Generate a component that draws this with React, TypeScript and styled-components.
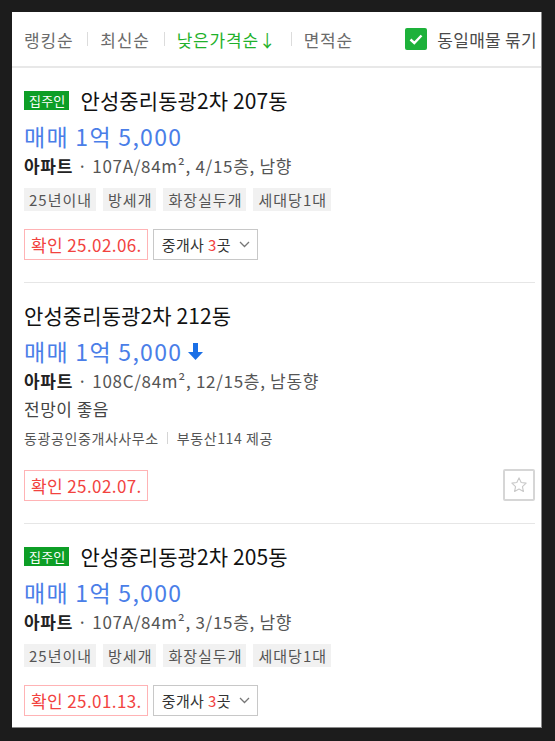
import React from "react";
import styled, { createGlobalStyle } from "styled-components";

const Global = createGlobalStyle`
  html, body { margin: 0; padding: 0; background: #1c1c1c; }
  body { font-family: "Noto Sans CJK KR", "Noto Sans", sans-serif; }
  * { box-sizing: border-box; }
`;

const Frame = styled.div`
  width: 555px;
  height: 741px;
  padding: 12px 13px 13px 12px;
  background: #1c1c1c;
`;

const Panel = styled.div`
  width: 530px;
  height: 716px;
  background: #fff;
  overflow: hidden;
  border-right: 1px solid #8a8a8a;
  border-bottom: 1px solid #8a8a8a;
`;

const Header = styled.div`
  height: 56px;
  display: flex;
  align-items: center;
  padding: 0 4px 0 12px;
  border-bottom: 2px solid #e8e8e8;
`;

const SortTab = styled.span<{ $active?: boolean }>`
  font-size: 17px;
  color: ${(p) => (p.$active ? "#1fb12b" : "#6b6b6b")};
  white-space: nowrap;
  letter-spacing: 0.8px;
`;

const Sep = styled.span`
  width: 1px;
  height: 14px;
  background: #dcdcdc;
  margin: 0 12px 0 14px;
`;

const GroupToggle = styled.label`
  margin-left: auto;
  display: flex;
  align-items: center;
  gap: 10px;
  font-size: 17px;
  color: #4a4a4a;
  white-space: nowrap;
  letter-spacing: 0.3px;
`;

const CheckBox = styled.span`
  width: 22px;
  height: 22px;
  border-radius: 2px;
  background: #1db13a;
  display: flex;
  align-items: center;
  justify-content: center;
`;

const Item = styled.div<{ $last?: boolean }>`
  margin: 0 6px 0 12px;
  padding: 20px 0 22px;
  border-bottom: ${(p) => (p.$last ? "none" : "1px solid #e6e6e6")};
  display: flex;
  flex-direction: column;
  align-items: flex-start;
`;

const TitleRow = styled.div`
  display: flex;
  align-items: center;
  gap: 11px;
  height: 24px;
`;

const OwnerBadge = styled.span`
  height: 19px;
  padding: 0 4px 0 5px;
  background: #0d9e26;
  color: #fff;
  font-size: 13px;
  line-height: 19px;
  letter-spacing: 0.2px;
`;

const Title = styled.span`
  font-size: 21px;
  line-height: 24px;
  color: #111;
  letter-spacing: 0.1px;
`;

const Price = styled.div`
  margin-top: 10px;
  font-size: 23px;
  line-height: 28px;
  color: #4a7ee8;
  display: flex;
  align-items: center;
  gap: 5px;
  letter-spacing: 1.3px;
`;

const Info = styled.div`
  margin-top: 3px;
  font-size: 17px;
  line-height: 26px;
  color: #555;
  letter-spacing: 0.7px;
  b { color: #222; font-weight: 700; }
`;

const Desc = styled.div`
  margin-top: 2px;
  font-size: 17px;
  line-height: 26px;
  color: #444;
  letter-spacing: 0.5px;
`;

const Tags = styled.div`
  margin-top: 9px;
  display: flex;
  gap: 7px;
`;

const Tag = styled.span`
  height: 23px;
  padding: 0 4px 0 5px;
  background: #f1f1f1;
  color: #555;
  font-size: 15px;
  line-height: 23px;
  letter-spacing: 1px;
`;

const Agency = styled.div`
  margin-top: 6px;
  display: flex;
  align-items: center;
  font-size: 14px;
  line-height: 20px;
  color: #555;
  letter-spacing: 0.6px;
`;

const SmallSep = styled.span`
  width: 1px;
  height: 12px;
  background: #d5d5d5;
  margin: 0 9px 0 8px;
`;

const BottomRow = styled.div<{ $gap: number }>`
  margin-top: ${(p) => p.$gap}px;
  align-self: stretch;
  display: flex;
  align-items: center;
  gap: 5px;
`;

const Confirm = styled.span`
  height: 31px;
  padding: 0 5px 0 6px;
  border: 1px solid #ffb3b5;
  color: #f2433f;
  font-size: 17px;
  line-height: 29px;
  letter-spacing: 0.4px;
  white-space: nowrap;
`;

const AgentBtn = styled.button`
  height: 31px;
  padding: 0 7px 0 8px;
  border: 1px solid #c8c8c8;
  background: #fff;
  color: #333;
  font-family: inherit;
  font-size: 15px;
  display: flex;
  align-items: center;
  gap: 8px;
  letter-spacing: 0.4px;
  em { font-style: normal; color: #f2433f; }
`;

const StarBtn = styled.button`
  margin-left: auto;
  width: 32px;
  height: 32px;
  padding: 0;
  border: 2px solid #d6d6d6;
  border-radius: 2px;
  background: #fff;
  display: flex;
  align-items: center;
  justify-content: center;
`;

const Chevron = () => (
  <svg width="11" height="7" viewBox="0 0 11 7">
    <path d="M1 1l4.5 4.5L10 1" fill="none" stroke="#777" strokeWidth="1.3" />
  </svg>
);

const DownArrow = () => (
  <svg width="17" height="19" viewBox="0 0 17 19">
    <path d="M6 1h5v9h5l-7.5 8L1 10h5z" fill="#1a6fe6" />
  </svg>
);

const Star = () => (
  <svg width="18" height="18" viewBox="0 0 24 24">
    <path
      d="M12 2.5l2.9 6.2 6.6.8-4.9 4.6 1.3 6.6L12 17.4l-5.9 3.3 1.3-6.6-4.9-4.6 6.6-.8z"
      fill="none"
      stroke="#c9c9c9"
      strokeWidth="1.5"
      strokeLinejoin="round"
    />
  </svg>
);

type Listing = {
  owner?: boolean;
  title: string;
  arrow?: boolean;
  info: string;
  desc?: string;
  tags?: string[];
  agency?: [string, string];
  date: string;
  agents?: boolean;
  star?: boolean;
};

const listings: Listing[] = [
  {
    owner: true,
    title: "안성중리동광2차 207동",
    info: " · 107A/84m², 4/15층, 남향",
    tags: ["25년이내", "방세개", "화장실두개", "세대당1대"],
    date: "확인 25.02.06.",
    agents: true,
  },
  {
    title: "안성중리동광2차 212동",
    arrow: true,
    info: " · 108C/84m², 12/15층, 남동향",
    desc: "전망이 좋음",
    agency: ["동광공인중개사사무소", "부동산114 제공"],
    date: "확인 25.02.07.",
    star: true,
  },
  {
    owner: true,
    title: "안성중리동광2차 205동",
    info: " · 107A/84m², 3/15층, 남향",
    tags: ["25년이내", "방세개", "화장실두개", "세대당1대"],
    date: "확인 25.01.13.",
    agents: true,
  },
];

export default function App() {
  return (
    <>
      <Global />
      <Frame>
        <Panel>
          <Header>
            <SortTab>랭킹순</SortTab>
            <Sep />
            <SortTab>최신순</SortTab>
            <Sep />
            <SortTab $active>낮은가격순↓</SortTab>
            <Sep />
            <SortTab>면적순</SortTab>
            <GroupToggle>
              <CheckBox>
                <svg width="14" height="11" viewBox="0 0 14 11">
                  <path d="M1.5 5.5l3.8 3.5L12.5 1.5" fill="none" stroke="#fff" strokeWidth="2.4" />
                </svg>
              </CheckBox>
              동일매물 묶기
            </GroupToggle>
          </Header>
          {listings.map((l, i) => (
            <Item key={i} $last={i === listings.length - 1}>
              <TitleRow>
                {l.owner && <OwnerBadge>집주인</OwnerBadge>}
                <Title>{l.title}</Title>
              </TitleRow>
              <Price>
                매매 1억 5,000
                {l.arrow && <DownArrow />}
              </Price>
              <Info>
                <b>아파트</b>
                {l.info}
              </Info>
              {l.desc && <Desc>{l.desc}</Desc>}
              {l.tags && (
                <Tags>
                  {l.tags.map((t) => (
                    <Tag key={t}>{t}</Tag>
                  ))}
                </Tags>
              )}
              {l.agency && (
                <Agency>
                  {l.agency[0]}
                  <SmallSep />
                  {l.agency[1]}
                </Agency>
              )}
              <BottomRow $gap={l.tags ? 18 : 21}>
                <Confirm>{l.date}</Confirm>
                {l.agents && (
                  <AgentBtn>
                    <span>
                      중개사 <em>3</em>곳
                    </span>
                    <Chevron />
                  </AgentBtn>
                )}
                {l.star && (
                  <StarBtn>
                    <Star />
                  </StarBtn>
                )}
              </BottomRow>
            </Item>
          ))}
        </Panel>
      </Frame>
    </>
  );
}
